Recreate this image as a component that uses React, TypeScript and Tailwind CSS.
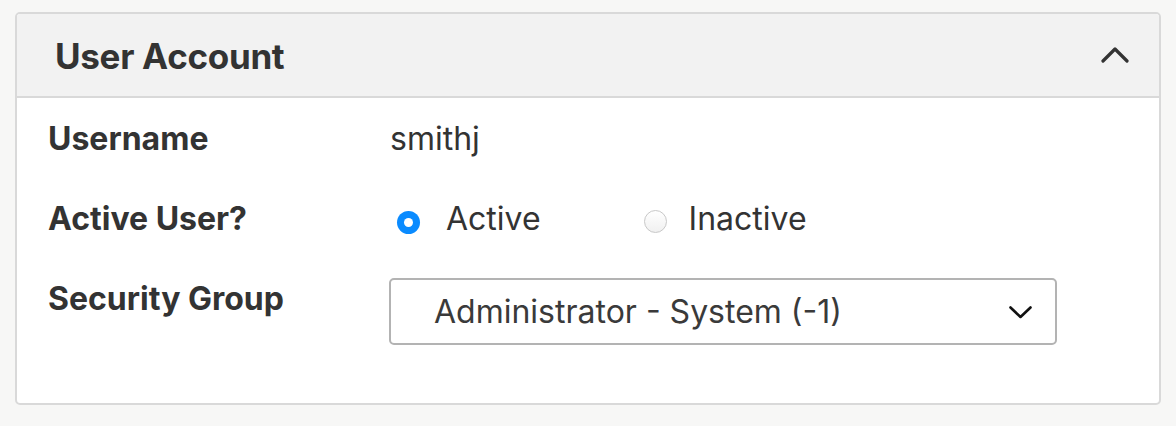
const font = { fontFamily: "Inter, 'Noto Sans', sans-serif" };

function Radio({ checked }: { checked: boolean }) {
  if (checked) {
    return (
      <span className="flex h-[23px] w-[23px] shrink-0 items-center justify-center rounded-full bg-[#0a8bff]">
        <span className="block h-[9px] w-[9px] rounded-full bg-white" />
      </span>
    );
  }
  return (
    <span className="block h-[23px] w-[23px] shrink-0 rounded-full border border-[#c8c8c8] bg-gradient-to-b from-white to-[#f0f0f0]" />
  );
}

export default function App() {
  return (
    <div className="min-h-[426px] bg-[#f7f7f6] px-[15px] pt-[12px] text-[#333]" style={font}>
      <div className="overflow-hidden rounded-[5px] border-2 border-[#d9d9d9] bg-white">
        {/* header */}
        <div className="flex h-[84px] items-center justify-between border-b-2 border-[#d9d9d9] bg-[#f2f2f2] pl-[38px] pr-[30px]">
          <h2 className="mt-[2px] text-[35px] font-bold tracking-[-0.3px]">User Account</h2>
          <svg width="28" height="17" viewBox="0 0 28 17" className="mt-[-2px]" fill="none">
            <polyline points="2,15 14,3 26,15" stroke="#333" strokeWidth="3.2" strokeLinecap="round" strokeLinejoin="round" />
          </svg>
        </div>

        {/* body */}
        <div className="flex flex-col gap-[40px] pb-[58px] pl-[31px] pt-[21px]">
          <div className="flex items-start">
            <div className="w-[342px] text-[32px] font-bold leading-[40px]">Username</div>
            <div className="text-[32px] leading-[40px]">smithj</div>
          </div>

          <div className="flex items-start">
            <div className="w-[342px] text-[32px] font-bold leading-[40px]">Active User?</div>
            <div className="flex h-[40px] items-center pl-[7px]">
              <label className="flex items-center gap-[26px] text-[32px]">
                <span className="mt-[6px]">
                  <Radio checked />
                </span>
                Active
              </label>
              <label className="ml-[103px] flex items-center gap-[22px] text-[32px]">
                <span className="mt-[4px]">
                  <Radio checked={false} />
                </span>
                Inactive
              </label>
            </div>
          </div>

          <div className="flex items-start">
            <div className="w-[341px] text-[32px] font-bold leading-[40px]">Security Group</div>
            <div className="-mt-[1px] flex h-[67px] w-[668px] items-center justify-between rounded-[5px] border-2 border-[#b3b3b3] pl-[43px] pr-[22px]">
              <span className="text-[32px] text-[#3a3a3a]">Administrator - System (-1)</span>
              <svg width="25" height="15" viewBox="0 0 25 15" fill="none" className="mt-[1px]">
                <polyline points="2.5,2.5 12.5,12 22.5,2.5" stroke="#111" strokeWidth="2.6" strokeLinecap="round" strokeLinejoin="round" />
              </svg>
            </div>
          </div>
        </div>
      </div>
    </div>
  );
}
